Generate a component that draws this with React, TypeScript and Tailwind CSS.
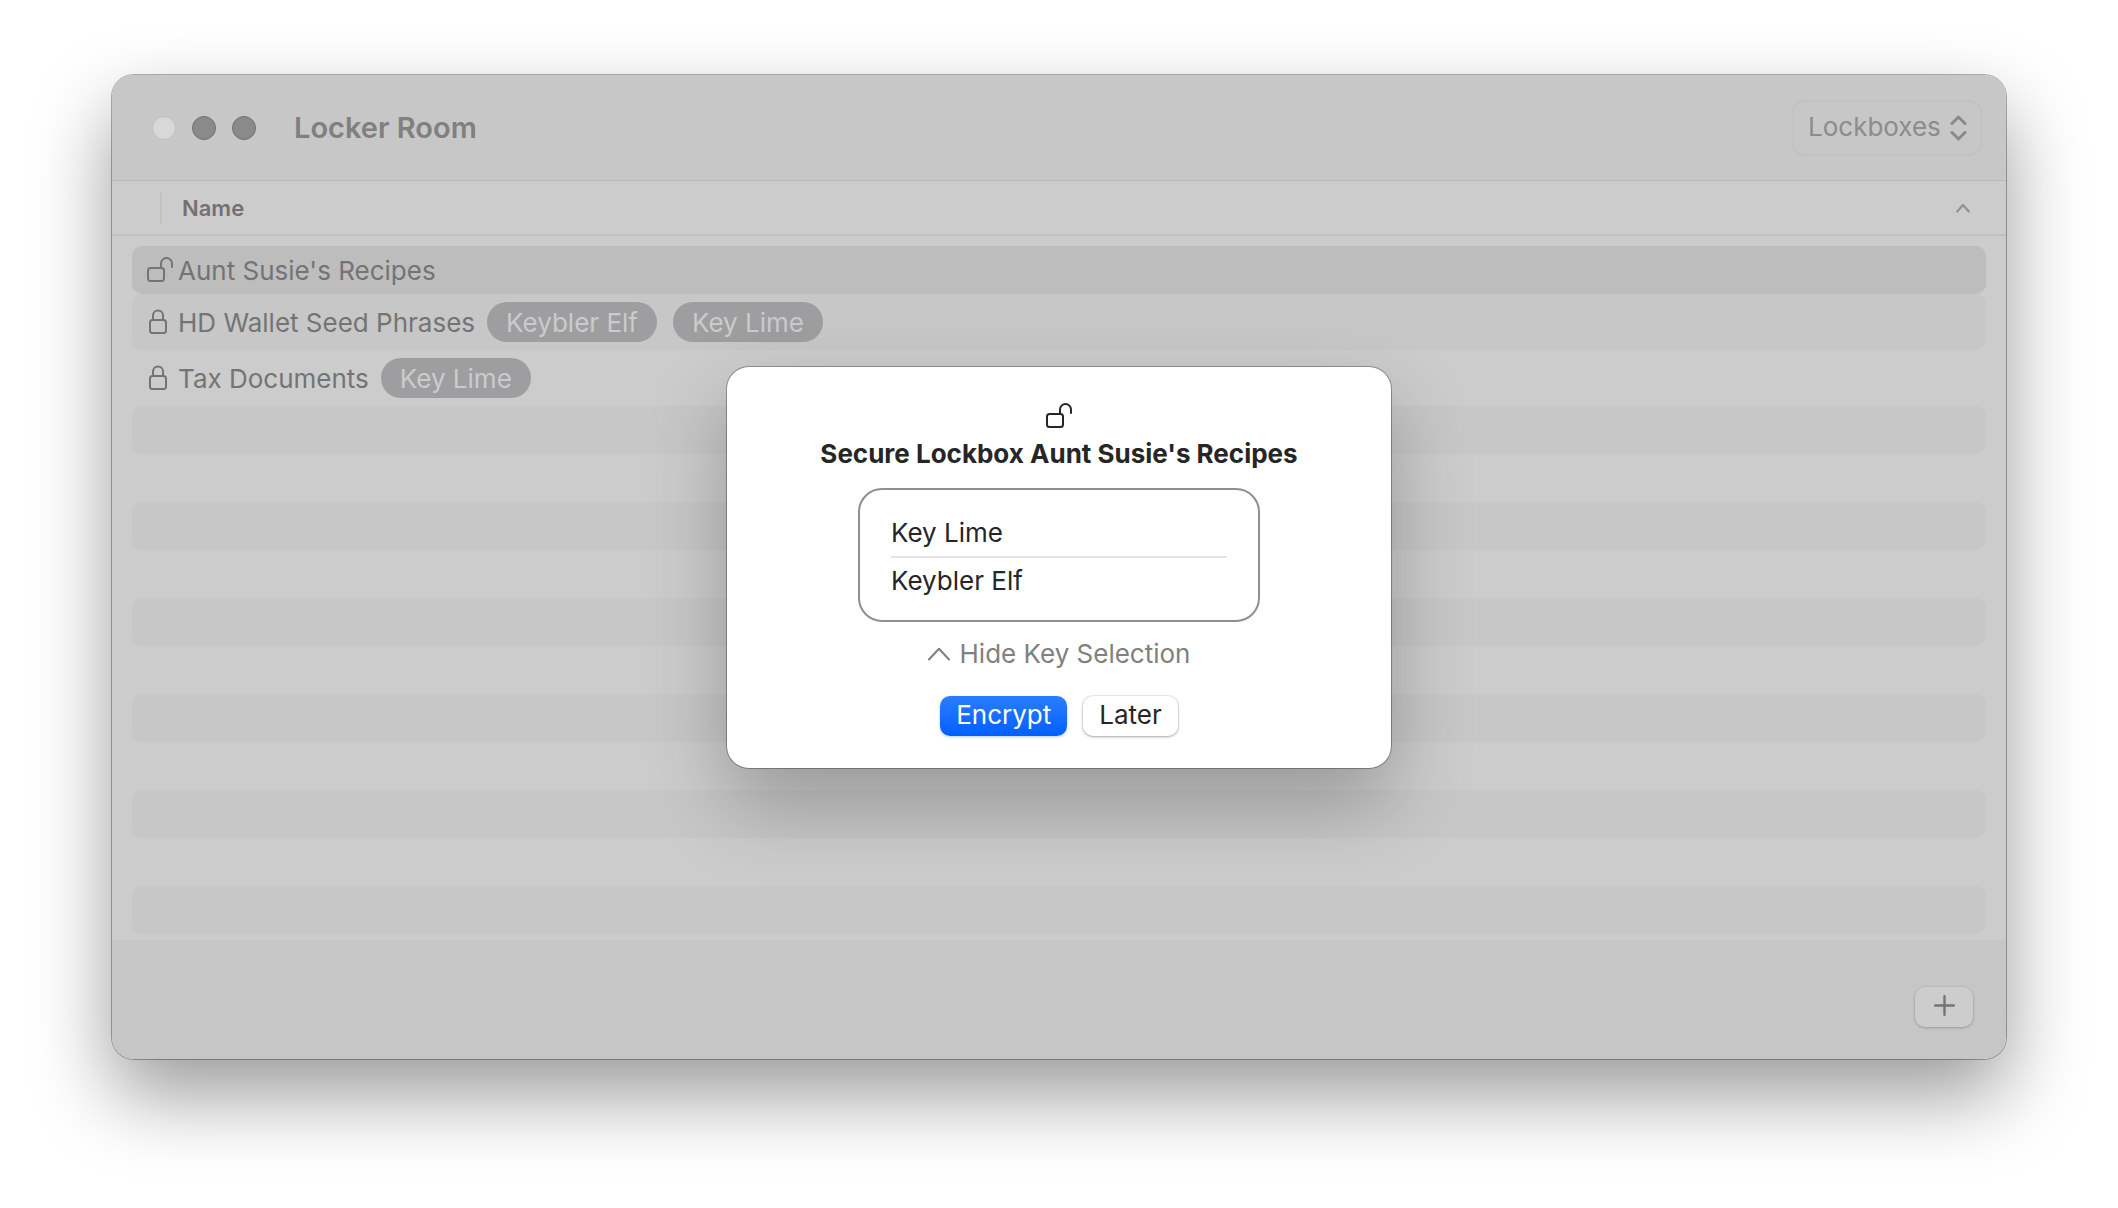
import React, { useState } from "react";

type Lockbox = { name: string; locked: boolean; keys: string[] };

const lockboxes: Lockbox[] = [
  { name: "Aunt Susie's Recipes", locked: false, keys: [] },
  { name: "HD Wallet Seed Phrases", locked: true, keys: ["Keybler Elf", "Key Lime"] },
  { name: "Tax Documents", locked: true, keys: ["Key Lime"] },
];

const fillerRows = Array.from({ length: 11 }, (_, i) => i);

function OpenLock() {
  return (
    <svg width="28" height="28" viewBox="0 0 28 28" fill="none" stroke="currentColor" strokeWidth="2" className="shrink-0" aria-hidden="true">
      <rect x="2" y="12" width="16" height="13" rx="2.5" />
      <path d="M15 12V7.5a5.5 5.5 0 0 1 11 0V11" strokeLinecap="round" />
    </svg>
  );
}

function ClosedLock() {
  return (
    <svg width="28" height="28" viewBox="0 0 28 28" fill="none" stroke="currentColor" strokeWidth="2" className="shrink-0" aria-hidden="true">
      <rect x="4" y="12" width="16" height="13" rx="2.5" />
      <path d="M7 12V7.5a5 5 0 0 1 10 0V12" />
    </svg>
  );
}

function TitleBar() {
  return (
    <header className="flex h-[106px] items-center border-b border-[#b9b9b9] bg-[#c7c7c7] pr-6 pl-10">
      <div className="flex gap-4">
        <button aria-label="Close" className="size-6 rounded-full border border-[#c0c0c0] bg-[#d8d8d8]" />
        <button aria-label="Minimize" className="size-6 rounded-full border border-[#6f6f6f] bg-[#8a8a8a]" />
        <button aria-label="Zoom" className="size-6 rounded-full border border-[#6f6f6f] bg-[#8a8a8a]" />
      </div>
      <h1 className="ml-[38px] text-[29px] leading-9 font-semibold text-[#808080]">Locker Room</h1>
      <div className="relative ml-auto">
        <select
          aria-label="View"
          className="h-14 w-[190px] appearance-none rounded-xl border-2 border-[#c2c2c2] bg-transparent pb-0.5 pl-[14px] text-[26px] text-[#8c8c8c]"
        >
          <option>Lockboxes</option>
          <option>Keys</option>
        </select>
        <svg
          width="18"
          height="28"
          viewBox="0 0 18 28"
          fill="none"
          stroke="#8a8a8a"
          strokeWidth="3"
          strokeLinecap="round"
          strokeLinejoin="round"
          className="pointer-events-none absolute top-[14px] right-[14px]"
          aria-hidden="true"
        >
          <path d="M2 9.500 8.500 3l6.500 6.500M2 18.500 8.500 25l6.500-6.500" />
        </svg>
      </div>
    </header>
  );
}

function LockboxTable() {
  return (
    <table className="block w-full bg-[#cccccc] pb-[6px] text-left">
      <thead className="block border-b-2 border-[#c1c1c1]">
        <tr className="flex h-[53px] items-center pr-9 pl-12">
          <th scope="col" className="flex h-8 flex-1 items-center border-l-2 border-[#c1c1c1] pl-5 text-[22px] leading-7 font-semibold text-[#727272]">
            Name
          </th>
          <td className="p-0">
            <svg width="14" height="10" viewBox="0 0 14 10" fill="none" stroke="#929292" strokeWidth="2.2" strokeLinecap="round" strokeLinejoin="round" aria-label="Sorted ascending">
              <path d="M1.200 8.500 7 2l5.800 6.500" />
            </svg>
          </td>
        </tr>
      </thead>
      <tbody className="block px-5 pt-[10px]">
        {lockboxes.map((box, i) => (
          <tr
            key={box.name}
            className={
              i === 0
                ? "flex h-12 items-center rounded-[10px] bg-[#bdbdbd]"
                : i === 1
                  ? "flex h-14 items-center rounded-[10px] bg-[#c7c7c7]"
                  : "flex h-14 items-center rounded-[10px]"
            }
          >
            <td className="flex items-center gap-1 pl-[14px] text-[26px] leading-8 text-[#747474]">
              {box.locked ? <ClosedLock /> : <OpenLock />}
              <span className="pt-0.5">{box.name}</span>
            </td>
            <td className="flex gap-4 pl-3">
              {box.keys.map((key) => (
                <span key={key} className="h-10 rounded-full bg-[#9e9ea0] px-[19px] pt-px text-[26px] leading-10 text-[#cbcbcb]">
                  {key}
                </span>
              ))}
            </td>
          </tr>
        ))}
        {fillerRows.map((i) => (
          <tr key={i} aria-hidden="true" className="block h-12 rounded-[10px] odd:bg-transparent even:bg-[#c7c7c7]">
            <td />
          </tr>
        ))}
      </tbody>
    </table>
  );
}

function SecureDialog() {
  const [open, setOpen] = useState(true);
  return (
    <div className="absolute inset-0 flex items-center justify-center">
      <section
        role="dialog"
        aria-modal="true"
        aria-labelledby="dialog-title"
        className="flex w-[664px] flex-col items-center rounded-[22px] bg-white pt-[35px] pb-8 text-[26px] leading-8 text-[#262626] shadow-[0_0_0_1px_rgba(0,0,0,0.3),0_36px_80px_rgba(0,0,0,0.25)]"
      >
        <OpenLock />
        <h2 id="dialog-title" className="mt-2 font-bold">
          Secure Lockbox Aunt Susie's Recipes
        </h2>
        {open && (
          <ul className="mt-[18px] w-[402px] rounded-[24px] border-2 border-[#8e8e93] px-[31px] pt-5 pb-4">
            <li className="border-b-2 border-[#e5e5e5]">
              <button className="block h-[46px] w-full text-left">Key Lime</button>
            </li>
            <li>
              <button className="block h-[46px] w-full text-left">Keybler Elf</button>
            </li>
          </ul>
        )}
        <button onClick={() => setOpen(!open)} aria-expanded={open} className="mt-4 flex items-center gap-2.5 text-[#808080]">
          <svg width="22" height="14" viewBox="0 0 22 14" fill="none" stroke="currentColor" strokeWidth="2" strokeLinecap="round" strokeLinejoin="round" aria-hidden="true">
            <path d="M1 12.500 11 1.800l10 10.700" />
          </svg>
          Hide Key Selection
        </button>
        <div className="mt-[26px] flex gap-4">
          <button className="h-10 rounded-[10px] bg-linear-to-b from-[#297dff] to-[#005fff] px-4 pb-0.5 text-white shadow-[0_1px_3px_rgba(0,95,255,0.3)]">
            Encrypt
          </button>
          <button className="h-10 rounded-[10px] bg-white px-4 pb-0.5 shadow-[0_0_0_1px_rgba(0,0,0,0.06),0_1px_3px_rgba(0,0,0,0.3)]">Later</button>
        </div>
      </section>
    </div>
  );
}

export default function App() {
  return (
    <div className="min-h-screen bg-white px-28 pt-[75px] pb-32 font-['Inter',sans-serif]">
      <main className="relative rounded-[22px] shadow-[0_0_0_1px_rgba(0,0,0,0.3),0_36px_80px_rgba(0,0,0,0.4)]">
        <div className="overflow-hidden rounded-[22px]">
          <TitleBar />
          <LockboxTable />
          <footer className="flex h-[119px] items-end justify-end bg-[#c6c6c6] pr-[33px] pb-8">
            <button aria-label="Add lockbox" className="flex h-10 w-[58px] justify-center rounded-[10px] bg-[#cdcdcd] pt-2 shadow-[0_0_0_1px_rgba(0,0,0,0.03),0_1px_3px_rgba(0,0,0,0.2)]">
              <svg width="21" height="21" viewBox="0 0 21 21" stroke="#747474" strokeWidth="2.400" strokeLinecap="round" aria-hidden="true">
                <path d="M10.500 1.200v18.600M1.200 10.500h18.600" />
              </svg>
            </button>
          </footer>
        </div>
        <SecureDialog />
      </main>
    </div>
  );
}
